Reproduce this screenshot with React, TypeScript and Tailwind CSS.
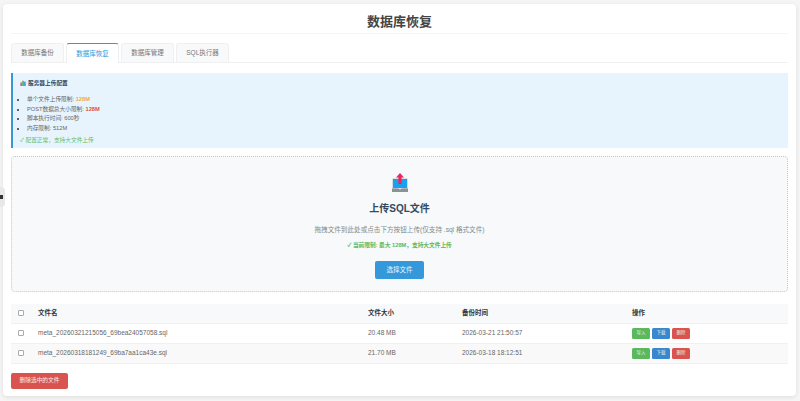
const font = "[font-family:'Liberation_Sans','Noto_Sans_CJK_SC',sans-serif]";

const tabs = ['数据库备份', '数据库恢复', '数据库管理', 'SQL执行器'];

const files = [
  { name: 'meta_20260321215056_69bea24057058.sql', size: '20.48 MB', time: '2026-03-21 21:50:57', bg: 'bg-white' },
  { name: 'meta_20260318181249_69ba7aa1ca43e.sql', size: '21.70 MB', time: '2026-03-18 18:12:51', bg: 'bg-[#f9f9f9]' },
];

function ChartIcon() {
  return (
    <svg width="6" height="6" viewBox="0 0 7 7" className="shrink-0">
      <rect width="7" height="7" fill="#e8eef2" />
      <rect x="0.5" y="3" width="1.7" height="4" fill="#e0457b" />
      <rect x="2.7" y="1" width="1.7" height="6" fill="#2fa84f" />
      <rect x="4.9" y="2" width="1.7" height="5" fill="#1d8fe1" />
    </svg>
  );
}

function UploadIcon() {
  return (
    <svg width="18" height="20" viewBox="0 0 18 20">
      <rect x="1" y="5" width="16" height="13" rx="1.5" fill="#d5dbe0" />
      <rect x="2" y="6" width="14" height="9" fill="#1aa0ee" />
      <path d="M1 15.5h6l2 1.2 2-1.2h6V19H1z" fill="#8a9298" />
      <path d="M9 0l4 4.5h-2.4V11H7.4V4.5H5z" fill="#f0265a" />
    </svg>
  );
}

export default function App() {
  return (
    <div className={`relative h-[401px] w-[800px] overflow-hidden bg-[#f5f5f5] pl-[3px] pt-1 ${font}`}>
      {/* sidebar toggle */}
      <div className="absolute left-0 top-[187px] flex h-5 w-[5px] items-center rounded-r-sm bg-[#e8e8e8]">
        <div className="h-1 w-[3px] bg-[#333]" />
      </div>

      <div className="h-[392px] w-[793px] rounded-[4px] bg-white px-2 shadow-[0_1px_4px_rgba(0,0,0,0.1)]">
        <h1 className="flex h-[30px] items-center justify-center border-b border-[#f5f5f5] pt-[7px] text-[13px] font-bold text-[#444]">
          数据库恢复
        </h1>

        <div className="mt-[9px] flex h-[20px] gap-[2px] border-b border-[#f0f0f0]">
          {tabs.map((tab, i) => (
            <div
              key={tab}
              className={
                i === 1
                  ? 'flex h-[20px] w-[53px] items-center justify-center rounded-t-[3px] border-x border-t border-x-[#eeeeee] border-t-[#3498db] bg-white text-[6.5px] text-[#3498db]'
                  : 'flex h-[19px] w-[53px] items-center justify-center rounded-t-[3px] border-x border-t border-[#f0f0f0] bg-[#f8f9fa] text-[6.5px] text-[#777]'
              }
            >
              {tab}
            </div>
          ))}
        </div>

        <div className="mt-[10px] h-[75px] border-l-2 border-[#3498db] bg-[#e8f4fd] pl-[7px] pt-[6px] text-[5.7px] text-[#666]">
          <div className="flex items-center gap-[2px] leading-[8px] font-bold text-[#34495e]">
            <ChartIcon />
            <span>服务器上传配置</span>
          </div>
          <ul className="mt-[8px] list-disc pl-[7px] leading-[9.6px] marker:text-[#333]">
            <li>
              单个文件上传限制: <span className="font-bold text-[#f5a742]">128M</span>
            </li>
            <li>
              POST数据总大小限制: <span className="font-bold text-[#e74c3c]">128M</span>
            </li>
            <li>脚本执行时间: 600秒</li>
            <li>内存限制: 512M</li>
          </ul>
          <div className="mt-[3px] text-[#66bb6a]">✓ 配置正常，支持大文件上传</div>
        </div>

        <div className="mt-2 flex h-[136px] flex-col items-center rounded-[4px] border border-dotted border-[#c5c8d0] bg-[#f8f9fa] pt-[16px]">
          <UploadIcon />
          <h3 className="mt-[9px] text-[10px] font-bold leading-[14px] text-[#34495e]">上传SQL文件</h3>
          <p className="mt-[9px] text-[6.6px] leading-[10px] text-[#7f8c8d]">
            拖拽文件到此处或点击下方按钮上传(仅支持 .sql 格式文件)
          </p>
          <p className="mt-[6px] text-[5.7px] font-bold leading-[9px] text-[#5cb85c]">
            ✓ 当前限制: 最大 128M，支持大文件上传
          </p>
          <button className="mt-[11px] h-[18px] w-[49px] rounded-[2px] bg-[#3498db] text-[6.5px] text-[#eaf5fc]">
            选择文件
          </button>
        </div>

        <table className="mt-[12px] w-[777px] table-fixed border-collapse text-[6.5px] text-[#666]">
          <thead>
            <tr className="h-[19px] border-b border-[#f0f0f0] bg-[#f8f9fa] text-left font-bold text-[#333]">
              <th className="w-[27px] pl-[7px]">
                <span className="block h-[6px] w-[6px] rounded-[1px] border border-[#aaa] bg-white" />
              </th>
              <th className="w-[330px]">文件名</th>
              <th className="w-[94px]">文件大小</th>
              <th className="w-[170px]">备份时间</th>
              <th>操作</th>
            </tr>
          </thead>
          <tbody>
            {files.map((f) => (
              <tr key={f.name} className={`h-[20px] border-b border-[#f0f0f0] ${f.bg}`}>
                <td className="pl-[7px]">
                  <span className="block h-[6px] w-[6px] rounded-[1px] border border-[#aaa] bg-white" />
                </td>
                <td>{f.name}</td>
                <td>{f.size}</td>
                <td>{f.time}</td>
                <td>
                  <div className="flex gap-[2px] text-[4.5px] text-[#e8f5e8]">
                    <span className="flex h-[11px] w-[18px] items-center justify-center rounded-[1.5px] bg-[#5cb85c]">导入</span>
                    <span className="flex h-[11px] w-[18px] items-center justify-center rounded-[1.5px] bg-[#3a87d0]">下载</span>
                    <span className="flex h-[11px] w-[18px] items-center justify-center rounded-[1.5px] bg-[#d9534f]">删除</span>
                  </div>
                </td>
              </tr>
            ))}
          </tbody>
        </table>

        <button className="mt-[9px] h-4 w-[57px] rounded-[2px] bg-[#d9534f] text-[5.7px] text-[#fbe9e8]">删除选中的文件</button>
      </div>
    </div>
  );
}
